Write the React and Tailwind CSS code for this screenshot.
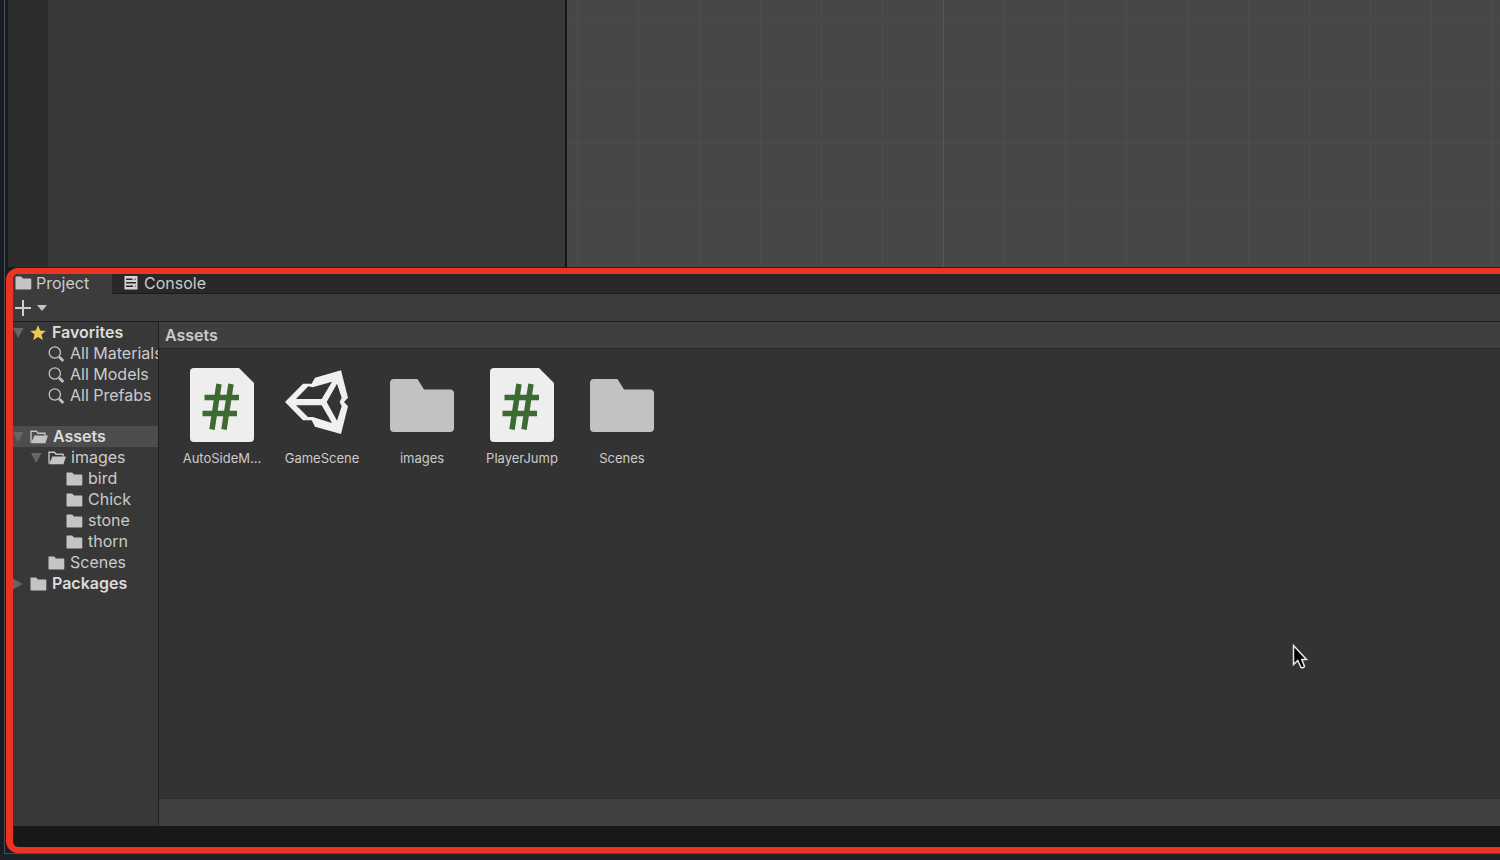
function FolderIcon({ className }) {
    return (
        <svg viewBox="0 0 17 14" className={className} fill="#c4c4c4" aria-hidden="true">
            <path d="M1 0.5h5.2l1.8 2H15.5a0.8 0.8 0 0 1 0.8 0.8V12.7a0.8 0.8 0 0 1-0.8 0.8H1.300a0.8 0.8 0 0 1-0.8-0.8V1.3A0.8 0.8 0 0 1 1 0.5z" />
        </svg>
    );
}

function OpenFolderIcon({ className }) {
    return (
        <svg viewBox="0 0 18 14" className={className} aria-hidden="true">
            <path d="M1 12.500V1.3h5.400l1.6 2H15v2.3" fill="none" stroke="#c4c4c4" strokeWidth="1.4" />
            <path d="M4.4 5.4H18L15.4 13.300H1z" fill="#c4c4c4" />
        </svg>
    );
}

function SearchIcon({ className }) {
    return (
        <svg viewBox="0 0 17 17" className={className} fill="none" stroke="#c4c4c4" aria-hidden="true">
            <circle cx="6.800" cy="7.500" r="5.6" strokeWidth="1.3" />
            <path d="M11.300 12l4 4" strokeWidth="2.6" />
        </svg>
    );
}

function StarIcon({ className }) {
    return (
        <svg viewBox="0 0 17 16" className={className} fill="#f0c850" aria-hidden="true">
            <path d="M8 0.3l2.2 5.2 5.600 0.4-4.3 3.6 1.400 5.5L8 12.1l-4.800 2.9 1.400-5.500L0.3 5.9 5.900 5.5z" />
        </svg>
    );
}

function ConsoleIcon({ className }) {
    return (
        <svg viewBox="0 0 14 14" className={className} aria-hidden="true">
            <path d="M0.5 0h13v13.500h-13z" fill="#d4d4d4" />
            <path d="M2 3.2h6.500M2 6.7h10M2 10.2h7" stroke="#282828" strokeWidth="1.4" />
            <path d="M10 3.2h2M10.500 10.2h1.500" stroke="#282828" strokeWidth="0.7" />
        </svg>
    );
}

function Arrow({ open }) {
    return (
        <svg viewBox="0 0 12 12" className="size-3 shrink-0" fill="#666" aria-hidden="true">
            {open ? <path d="M0 1h10.500L5.200 11z" /> : <path d="M0 0.500L9.500 6 0 11.500z" />}
        </svg>
    );
}

function ScriptThumb() {
    return (
        <svg viewBox="0 0 64 74" className="h-[74px] w-16" aria-hidden="true">
            <path d="M4 0H49L64 15V70a4 4 0 0 1-4 4H4a4 4 0 0 1-4-4V4a4 4 0 0 1 4-4z" fill="#eee" />
            <path d="M29 16L22 61.500M41 16L34 61.500M14.500 29.500H49M12.500 45.500H47" stroke="#3c6a31" strokeWidth="5.500" fill="none" />
        </svg>
    );
}

function SceneThumb() {
    return (
        <svg viewBox="360 39 192 222" className="h-[74px] w-16 overflow-visible" fill="#f0f0f0" fillRule="evenodd" aria-hidden="true">
            <path d="M345 141L399 86H425L435 68L513 46L534 128L522 141L534 154L513 237L435 215L425 196H399Z M378 132L415 94L428 97L486 80L455 132Z M378 151L414 186L428 186L486 204L455 151Z M470 141L501 86L515 128L509 141L515 154L501 197Z" />
        </svg>
    );
}

function FolderThumb() {
    return (
        <svg viewBox="0 0 64 74" className="h-[74px] w-16" fill="#c2c2c2" aria-hidden="true">
            <path d="M4 11H27.500L34 21.500H60a4 4 0 0 1 4 4V60a4 4 0 0 1-4 4H4a4 4 0 0 1-4-4V15a4 4 0 0 1 4-4z" />
        </svg>
    );
}

const icons = {
    star: <StarIcon className="h-4 w-[17px] shrink-0" />,
    search: <SearchIcon className="size-[17px] shrink-0" />,
    open: <OpenFolderIcon className="h-3.5 w-[18px] shrink-0" />,
    folder: <FolderIcon className="h-3.5 w-[17px] shrink-0" />,
};

const indents = ["pl-0", "pl-[18px]", "pl-[36px]"];

const favorites = [
    { name: "Favorites", icon: "star", level: 0, arrow: "open" },
    { name: "All Materials", icon: "search", level: 1 },
    { name: "All Models", icon: "search", level: 1 },
    { name: "All Prefabs", icon: "search", level: 1 },
];

const folders = [
    { name: "Assets", icon: "open", level: 0, arrow: "open", selected: true },
    { name: "images", icon: "open", level: 1, arrow: "open" },
    { name: "bird", icon: "folder", level: 2 },
    { name: "Chick", icon: "folder", level: 2 },
    { name: "stone", icon: "folder", level: 2 },
    { name: "thorn", icon: "folder", level: 2 },
    { name: "Scenes", icon: "folder", level: 1 },
    { name: "Packages", icon: "folder", level: 0, arrow: "closed" },
];

const assets = [
    { name: "AutoSideM...", thumb: <ScriptThumb /> },
    { name: "GameScene", thumb: <SceneThumb /> },
    { name: "images", thumb: <FolderThumb /> },
    { name: "PlayerJump", thumb: <ScriptThumb /> },
    { name: "Scenes", thumb: <FolderThumb /> },
];

function Tree({ items }) {
    return (
        <ul>
            {items.map((item) => (
                <li key={item.name} className={item.selected ? "bg-[#4d4d4d]" : ""}>
                    <button
                        className={`flex h-[21px] w-full items-center gap-[5px] overflow-hidden whitespace-nowrap ${indents[item.level]} ${item.level === 0 ? "font-semibold text-[#dcdcdc]" : ""}`}
                    >
                        {item.arrow ? <Arrow open={item.arrow === "open"} /> : <span className="w-3 shrink-0" />}
                        {icons[item.icon]}
                        <span className="pb-0.5">{item.name}</span>
                    </button>
                </li>
            ))}
        </ul>
    );
}

function SceneArea() {
    return (
        <div className="flex h-67 border-b border-[#202020]">
            <div className="w-10 bg-[#2d2d2d]" />
            <div className="w-[517px] bg-[#383838]" />
            <div className="w-0.5 bg-[#151515]" />
            <div className="flex-1 bg-[#474747] bg-[linear-gradient(to_right,#5a5a5a_1px,transparent_1px),linear-gradient(to_right,#4d4d4d_1px,transparent_1px),linear-gradient(to_bottom,#4c4c4c_1px,transparent_1px)] bg-[size:610px_100%,61px_61px,61px_61px] bg-position-[376px_0,10px_0,0_21px]" />
        </div>
    );
}

function ProjectPanel() {
    return (
        <section className="-ml-0.5 flex flex-1 flex-col overflow-hidden rounded-l-xl border-6 border-r-0 border-l-7 border-[#ee3322] bg-[#191919]">
            <div role="tablist" className="flex h-5 border-b border-[#1c1c1c] bg-[#282828]">
                <button role="tab" aria-selected="true" className="-mb-px flex w-[99px] items-center gap-1 bg-[#3c3c3c] pb-0.5 pl-0.5">
                    <FolderIcon className="h-3.5 w-[17px]" />
                    Project
                </button>
                <button role="tab" aria-selected="false" className="flex items-center gap-1.5 px-3 pb-0.5">
                    <ConsoleIcon className="size-3.5" />
                    Console
                </button>
            </div>
            <div className="flex h-7 items-center border-b border-[#1f1f1f] bg-[#3c3c3c] pl-0.5">
                <button aria-label="Create" className="flex items-center gap-1.5">
                    <svg viewBox="0 0 16 16" className="size-4" stroke="#d0d0d0" strokeWidth="2" aria-hidden="true">
                        <path d="M8 0v16M0 8h16" />
                    </svg>
                    <svg viewBox="0 0 10 6" className="h-1.5 w-2.5" fill="#c4c4c4" aria-hidden="true">
                        <path d="M0 0h10L5 6z" />
                    </svg>
                </button>
            </div>
            <div className="flex flex-1">
                <nav className="w-[146px] shrink-0 space-y-5 overflow-hidden border-r border-[#1f1f1f] bg-[#383838]">
                    <Tree items={favorites} />
                    <Tree items={folders} />
                </nav>
                <main className="flex flex-1 flex-col bg-[#333]">
                    <h2 className="h-[27px] border-b border-[#262626] bg-[#3f3f3f] pl-1.5 leading-[26px] font-semibold">Assets</h2>
                    <div className="flex flex-1 flex-wrap content-start pt-[19px] pl-[13px]">
                        {assets.map((asset) => (
                            <button key={asset.name} className="flex w-25 flex-col items-center gap-1.5 text-[13px] leading-5">
                                {asset.thumb}
                                <span>{asset.name}</span>
                            </button>
                        ))}
                    </div>
                    <footer className="h-7 border-t border-[#282828] bg-[#414141]" />
                </main>
            </div>
            <div className="h-[21px]" />
        </section>
    );
}

export default function App() {
    return (
        <div className="relative flex min-h-screen flex-col bg-[#181b21] font-[Inter,sans-serif] text-[16px] text-[#cbcbcb]">
            <div className="ml-1 flex flex-1 flex-col border-b border-l border-[#4a4f52] pl-[3px]">
                <SceneArea />
                <ProjectPanel />
            </div>
            <div className="h-1.5 bg-[#1c2327]" />
            <svg viewBox="0 0 16 26" className="absolute top-[644px] left-[1292px] h-[26px] w-4" aria-hidden="true">
                <path d="M1.500 1.500V20.500L5.800 16.500L9 23.500Q11 24.500 12.500 22.500L9.800 15.500H14.500Z" fill="#000" stroke="#e8e8e8" strokeWidth="1.500" />
            </svg>
        </div>
    );
}
